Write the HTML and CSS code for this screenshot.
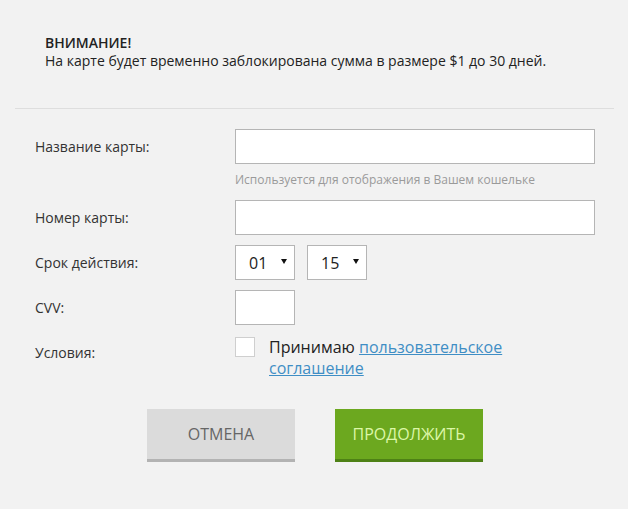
FILE: index.html
```html
<!DOCTYPE html>
<html lang="ru">
<head>
<meta charset="utf-8">
<title>Карта</title>
<link rel="stylesheet" href="styles.css">
</head>
<body>
<div class="notice">
  <div class="notice-title">ВНИМАНИЕ!</div>
  <div class="notice-text">На карте будет временно заблокирована сумма в размере $1 до 30 дней.</div>
</div>
<div class="divider"></div>
<form class="form">
  <div class="row">
    <label class="label">Название карты:</label>
    <input class="input input-wide" type="text">
  </div>
  <div class="hint">Используется для отображения в Вашем кошельке</div>
  <div class="row">
    <label class="label">Номер карты:</label>
    <input class="input input-wide" type="text">
  </div>
  <div class="row row-gap">
    <label class="label">Срок действия:</label>
    <div class="selects">
      <div class="select"><span>01</span><svg class="arrow" width="6" height="5" viewBox="0 0 6 5"><path d="M0 0H6L3 5Z" fill="#111"/></svg></div>
      <div class="select"><span>15</span><svg class="arrow" width="6" height="5" viewBox="0 0 6 5"><path d="M0 0H6L3 5Z" fill="#111"/></svg></div>
    </div>
  </div>
  <div class="row row-gap">
    <label class="label">CVV:</label>
    <input class="input input-small" type="text">
  </div>
  <div class="row row-terms">
    <div class="label label-terms">Условия:</div>
    <div class="terms">
      <span class="checkbox"></span>
      <p class="terms-text">Принимаю <a href="#" class="link">пользовательское соглашение</a></p>
    </div>
  </div>
  <div class="buttons">
    <button type="button" class="btn btn-cancel">Отмена</button>
    <button type="button" class="btn btn-continue">Продолжить</button>
  </div>
</form>
</body>
</html>
```
FILE: styles.css
```css
html, body {
  margin: 0;
  padding: 0;
}
body {
  background: #f2f2f2;
  font-family: "Open Sans", "Noto Sans", sans-serif;
  color: #333;
  width: 628px;
  height: 509px;
  overflow: hidden;
}
.notice {
  padding: 34px 45px 0;
  height: 108px;
  box-sizing: border-box;
  color: #222;
  font-size: 14px;
  line-height: 18px;
}
.notice-title {
  font-weight: 600;
}
.divider {
  margin: 0 14px 0 15px;
  border-top: 1px solid #dedede;
}
.form {
  padding-top: 20px;
}
.row {
  display: flex;
  align-items: center;
}
.row-gap {
  margin-top: 10px;
}
.label {
  box-sizing: border-box;
  width: 235px;
  flex: none;
  padding-left: 35px;
  font-size: 14px;
  line-height: 20px;
  color: #333;
}
.input {
  box-sizing: border-box;
  height: 35px;
  margin: 0;
  border: 1px solid #b5b5b5;
  background: #fff;
  border-radius: 0;
  padding: 0 10px;
  font-family: inherit;
  outline: none;
}
.input-wide {
  width: 360px;
}
.input-small {
  width: 60px;
}
.hint {
  margin: 8px 0 12px 235px;
  font-size: 12px;
  line-height: 16px;
  color: #9a9a9a;
}
.selects {
  display: flex;
  gap: 12px;
}
.select {
  box-sizing: border-box;
  width: 60px;
  height: 35px;
  border: 1px solid #b5b5b5;
  background: #fff;
  display: flex;
  align-items: center;
  justify-content: space-between;
  padding: 0 7px 0 13px;
  font-size: 16px;
  color: #222;
}
.arrow {
  display: block;
  margin-top: -2px;
}
.row-terms {
  align-items: flex-start;
  margin-top: 12px;
}
.label-terms {
  padding-top: 6px;
}
.terms {
  display: flex;
  align-items: flex-start;
  gap: 14px;
}
.checkbox {
  display: block;
  flex: none;
  box-sizing: border-box;
  width: 20px;
  height: 20px;
  border: 1px solid #cfcfcf;
  background: #fff;
}
.terms-text {
  margin: 0;
  width: 255px;
  font-size: 16px;
  line-height: 21px;
  color: #222;
}
.link {
  color: #3f8ec5;
  text-decoration: underline;
}
.buttons {
  display: flex;
  justify-content: center;
  gap: 40px;
  margin-top: 30px;
  padding-left: 2px;
}
.btn {
  box-sizing: content-box;
  width: 148px;
  height: 50px;
  padding: 0;
  margin: 0;
  border: none;
  border-radius: 0;
  font-family: inherit;
  font-size: 16px;
  text-transform: uppercase;
  cursor: pointer;
}
.btn-cancel {
  background: #dbdbdb;
  border-bottom: 3px solid #b3b3b3;
  color: #666;
}
.btn-continue {
  background: #6ca81f;
  border-bottom: 3px solid #4e8116;
  color: #dcf7a8;
}
```
